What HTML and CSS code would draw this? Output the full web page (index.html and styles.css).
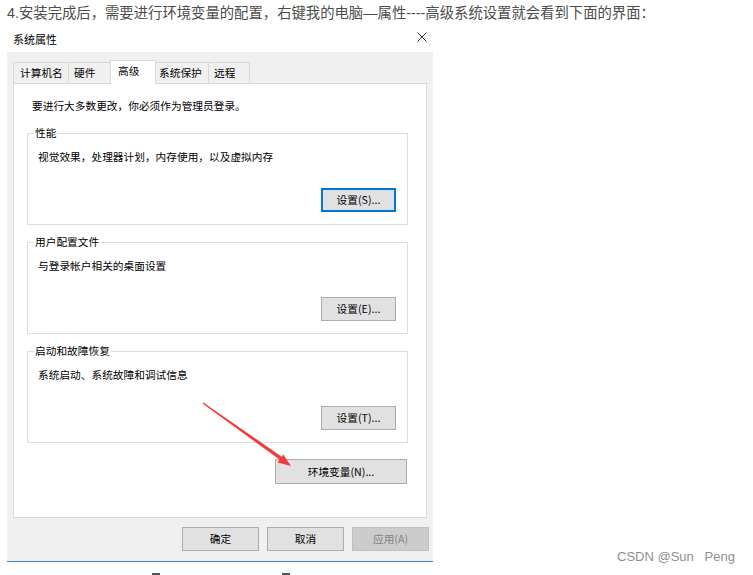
FILE: index.html
```html
<!DOCTYPE html>
<html lang="zh-CN">
<head>
<meta charset="utf-8">
<title>系统属性</title>
<link rel="stylesheet" href="styles.css">
</head>
<body>
<p class="intro">4.安装完成后，需要进行环境变量的配置，右键我的电脑—属性----高级系统设置就会看到下面的界面：</p>
<div class="dialog">
  <div class="titlebar">
    <span class="title">系统属性</span>
    <svg class="close" width="10" height="10" viewBox="0 0 10 10"><path d="M0.5 0.5 L9.5 9.5 M9.5 0.5 L0.5 9.5" stroke="#333" stroke-width="1" fill="none"/></svg>
  </div>
  <div class="dlg-body">
    <div class="tabs">
      <div class="tab t1">计算机名</div>
      <div class="tab t2">硬件</div>
      <div class="tab t3 active">高级</div>
      <div class="tab t4">系统保护</div>
      <div class="tab t5">远程</div>
    </div>
    <div class="panel">
      <p class="notice">要进行大多数更改，你必须作为管理员登录。</p>
      <div class="group">
        <span class="legend">性能</span>
        <p class="desc">视觉效果，处理器计划，内存使用，以及虚拟内存</p>
        <button class="btn btn-default">设置(S)...</button>
      </div>
      <div class="group">
        <span class="legend">用户配置文件</span>
        <p class="desc">与登录帐户相关的桌面设置</p>
        <button class="btn">设置(E)...</button>
      </div>
      <div class="group">
        <span class="legend">启动和故障恢复</span>
        <p class="desc">系统启动、系统故障和调试信息</p>
        <button class="btn">设置(T)...</button>
      </div>
      <button class="btn btn-env">环境变量(N)...</button>
    </div>
    <div class="actions">
      <button class="btn btn-action">确定</button>
      <button class="btn btn-action">取消</button>
      <button class="btn btn-action btn-disabled">应用(A)</button>
    </div>
  </div>
</div>
<div class="fragments"><span></span><span></span></div>
<svg class="arrow" width="753" height="575" viewBox="0 0 753 575">
  <polygon points="202.6,403.6 203.4,402.4 282.5,457.3 280.5,460.2" fill="#f03c3c"/>
  <polygon points="291,466 277.5,462.6 283.3,454.4" fill="#f03c3c"/>
</svg>
<div class="watermark">CSDN @Sun&nbsp;&nbsp;&nbsp;Peng</div>
</body>
</html>
```
FILE: styles.css
```css
html, body {
  margin: 0;
  background: #fff;
}
body {
  width: 753px;
  height: 575px;
  overflow: hidden;
  position: relative;
  font-family: "Noto Sans CJK SC", sans-serif;
  color: #000;
}
.intro {
  margin: 0;
  padding-left: 7px;
  height: 26px;
  line-height: 26px;
  font-size: 14.35px;
  color: #4d4d4d;
  font-family: "Liberation Sans", "Noto Sans CJK SC", sans-serif;
  white-space: nowrap;
}
.dialog {
  margin-left: 7px;
  width: 426px;
}
.titlebar {
  height: 26px;
  display: flex;
  align-items: center;
  justify-content: space-between;
  padding: 0 6px;
}
.title {
  font-size: 11px;
  line-height: 16px;
}
.close {
  margin-top: -4px;
}
.dlg-body {
  background: #f0f0f0;
  height: 510px;
  box-sizing: border-box;
  padding: 8px 6px 0;
  border-bottom: 1px solid #3c8bd5;
}
.tabs {
  display: flex;
  align-items: flex-end;
  height: 24px;
  margin-bottom: -1px;
  position: relative;
  z-index: 1;
}
.tab {
  box-sizing: border-box;
  height: 21px;
  margin-bottom: 1px;
  border: 1px solid #d9d9d9;
  border-bottom: none;
  border-right: none;
  background: #f0f0f0;
  font-size: 10.7px;
  line-height: 20px;
  padding-left: 5px;
  white-space: nowrap;
}
.tab.t1 { width: 55px; padding-left: 6px; }
.tab.t2 { width: 42px; }
.tab.t3 { width: 46px; padding-left: 7px; }
.tab.t4 { width: 52px; padding-left: 3px; }
.tab.t5 { width: 42px; border-right: 1px solid #d9d9d9; }
.tab.active {
  height: 24px;
  margin-bottom: 0;
  background: #fff;
  border-right: 1px solid #d9d9d9;
  line-height: 19px;
}
.tab.active + .tab {
  border-left: none;
}
.panel {
  background: #fff;
  border: 1px solid #d9d9d9;
  height: 435px;
  box-sizing: border-box;
  padding: 14px 18px 0 13px;
  display: flex;
  flex-direction: column;
}
.notice {
  margin: 0 0 0 5px;
  font-size: 10.7px;
  line-height: 16px;
}
.group {
  position: relative;
  margin-top: 19px;
  height: 92px;
  box-sizing: border-box;
  border: 1px solid #dcdcdc;
  padding: 15px 11px 12px 10px;
  display: flex;
  flex-direction: column;
}
.group + .group {
  margin-top: 17px;
}
.legend {
  position: absolute;
  top: -9px;
  left: 6px;
  padding: 0 1px;
  background: #fff;
  font-size: 10.7px;
  line-height: 16px;
}
.desc {
  margin: 0;
  font-size: 10.7px;
  line-height: 16px;
}
.btn {
  font-family: inherit;
  font-size: 10.7px;
  color: #000;
  background: #e1e1e1;
  border: 1px solid #adadad;
  box-sizing: border-box;
  width: 75px;
  height: 24px;
  padding: 0;
  margin: 0;
  line-height: 16px;
}
.group .btn {
  margin-top: auto;
  align-self: flex-end;
}
.btn-default {
  border-color: #0078d7;
  box-shadow: inset 0 0 0 1px #0078d7;
}
.btn-env {
  align-self: flex-end;
  margin-top: 16px;
  margin-right: 1px;
  width: 132px;
  height: 25px;
}
.actions {
  display: flex;
  justify-content: flex-end;
  gap: 8px;
  margin-top: 9px;
  margin-right: -2px;
}
.btn-action {
  width: 77px;
}
.btn-disabled {
  background: #cccccc;
  border-color: #bfbfbf;
  color: #838383;
}
.fragments {
  display: flex;
  padding-left: 152px;
  margin-top: 11px;
}
.fragments span {
  width: 8px;
  height: 3px;
  background: #555;
}
.fragments span + span {
  margin-left: 122px;
}
.arrow {
  position: absolute;
  left: 0;
  top: 0;
  pointer-events: none;
}
.watermark {
  position: absolute;
  left: 617px;
  top: 549px;
  font-family: "Liberation Sans", sans-serif;
  font-size: 13px;
  line-height: 16px;
  color: #8f8f8f;
  white-space: nowrap;
}
```
